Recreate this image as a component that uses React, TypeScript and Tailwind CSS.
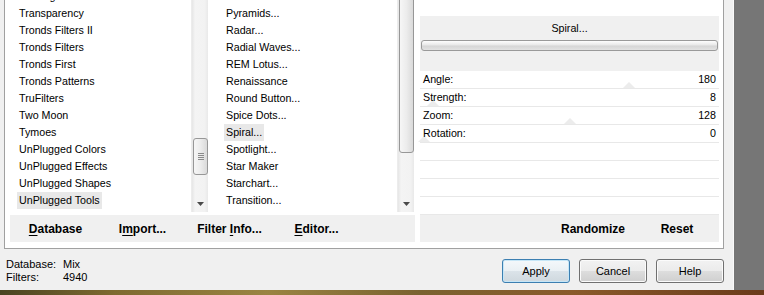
import React from "react";

const list1 = [
  "Tramages",
  "Transparency",
  "Tronds Filters II",
  "Tronds Filters",
  "Tronds First",
  "Tronds Patterns",
  "TruFilters",
  "Two Moon",
  "Tymoes",
  "UnPlugged Colors",
  "UnPlugged Effects",
  "UnPlugged Shapes",
  "UnPlugged Tools",
  "VanDerLee",
];

const list2 = [
  "",
  "Pyramids...",
  "Radar...",
  "Radial Waves...",
  "REM Lotus...",
  "Renaissance",
  "Round Button...",
  "Spice Dots...",
  "Spiral...",
  "Spotlight...",
  "Star Maker",
  "Starchart...",
  "Transition...",
  "Tri Blinds...",
];

const params = [
  { name: "Angle:", value: 180 },
  { name: "Strength:", value: 8 },
  { name: "Zoom:", value: 128 },
  { name: "Rotation:", value: 0 },
  null,
  null,
  null,
  null,
];

function DownArrow() {
  return (
    <svg width="7" height="4" viewBox="0 0 7 4" className="block">
      <path d="M0 0 H7 L3.5 4 Z" fill="#4a4a4a" />
    </svg>
  );
}

function Grip() {
  return (
    <div className="flex flex-col gap-[1px]">
      <div className="w-[6px] h-[1px] bg-[#8a8a8a]" />
      <div className="w-[6px] h-[1px] bg-[#8a8a8a]" />
      <div className="w-[6px] h-[1px] bg-[#8a8a8a]" />
      <div className="w-[6px] h-[1px] bg-[#8a8a8a]" />
    </div>
  );
}

function ListBox({
  items,
  selected,
  indent,
  variant,
}: {
  items: string[];
  selected: number;
  indent: string;
  variant: 1 | 2;
}) {
  return (
    <div className="flex h-[212px] overflow-hidden">
      <div className="flex-1 overflow-hidden">
        <div className="-mt-[12px] flex flex-col">
          {items.map((it, i) => (
            <div key={i} className={`h-[17px] leading-[17px] whitespace-nowrap ${indent}`}>
              <span className={`inline-block px-[2px] h-[17px] ${i === selected ? "bg-[#e8e8e8]" : ""}`}>{it}</span>
            </div>
          ))}
        </div>
      </div>
      <div className="relative w-[17px] h-full bg-[linear-gradient(90deg,#e6e6e6_0%,#f4f4f4_20%,#f2f2f2_80%,#e9e9e9_100%)] border-l border-[#ececec]">
        {variant === 1 ? (
          <div className="absolute left-[1px] top-[138px] w-[15px] h-[37px] rounded-[3px] border border-[#979797] bg-[linear-gradient(90deg,#f6f6f6_0%,#ececec_50%,#dadada_100%)] flex items-center justify-center">
            <Grip />
          </div>
        ) : (
          <div className="absolute left-[1px] -top-[4px] w-[15px] h-[157px] rounded-[3px] border border-[#979797] bg-[linear-gradient(90deg,#f6f6f6_0%,#ececec_50%,#dadada_100%)]" />
        )}
        <div className="absolute bottom-[6px] left-[5px]">
          <DownArrow />
        </div>
      </div>
    </div>
  );
}

function WinButton({ label, primary }: { label: string; primary?: boolean }) {
  return (
    <div
      className={`h-[24px] rounded-[3px] border flex items-center justify-center text-[11px] text-black ${
        primary
          ? "w-[68px] border-[#3c7fb1] shadow-[inset_0_0_0_1px_#c6e6f7] bg-[linear-gradient(#f4f8fb_0%,#eaf0f4_50%,#dbe3e9_51%,#cfd8de_100%)]"
          : "w-[68px] border-[#707070] shadow-[inset_0_0_0_1px_#fbfbfb] bg-[linear-gradient(#f2f2f2_0%,#ebebeb_50%,#dddddd_51%,#cfcfcf_100%)]"
      }`}
    >
      {label}
    </div>
  );
}

export default function App() {
  return (
    <div className="w-[764px] h-[295px] overflow-hidden flex flex-col [font-family:'Liberation_Sans',Arial,sans-serif] text-[10.7px] text-black">
      <div className="flex h-[290px]">
        <div className="w-[734px] h-full bg-[#f0f0f0] border-r border-[#fafafa] flex flex-col">
          <div className="ml-[4px] w-[720px] h-[249px] border-x border-b border-[#a0a0a0] bg-white flex flex-col">
            <div className="flex h-[215px] items-start">
              <div className="w-[203px]">
                <ListBox items={list1} selected={12} indent="pl-[12px]" variant={1} />
              </div>
              <div className="ml-[5px] w-[201px]">
                <ListBox items={list2} selected={8} indent="pl-[11px]" variant={2} />
              </div>
              <div className="ml-[6px] w-[299px] flex flex-col">
                <div className="h-[16px]" />
                <div className="h-[55px] bg-[#f0f0f0] flex flex-col">
                  <div className="pt-[5px] h-[19px] leading-[14px] text-center">Spiral...</div>
                  <div className="mt-[5px] mx-[1px] h-[11px] rounded-[3px] border border-[#9a9a9a] bg-[linear-gradient(#fdfdfd_0%,#e8e8e8_45%,#d6d6d6_55%,#e2e2e2_100%)]" />
                </div>
                {params.map((p, i) => (
                  <div key={i} className="relative h-[18px] border-b border-[#e8e8e8] flex items-center justify-between px-[3px] leading-[17px]">
                    {p && (
                      <>
                        <div
                          className="absolute bottom-0 w-0 h-0 border-x-[6px] border-x-transparent border-b-[6px] border-b-[#ececec]"
                          style={{ left: 4 + (p.value / 255) * 290 - 6 }}
                        />
                        <span className="relative">{p.name}</span>
                        <span className="relative">{p.value}</span>
                      </>
                    )}
                  </div>
                ))}
              </div>
            </div>
            <div className="flex h-[27px]">
              <div className="ml-[5px] w-[405px] h-full bg-[#f0f0f0] flex items-center pl-[2px] font-bold text-[12px]">
                <div className="w-[87px] text-center">
                  <span className="underline underline-offset-[2px]">D</span>atabase
                </div>
                <div className="w-[87px] text-center">
                  I<span className="underline underline-offset-[2px]">m</span>port...
                </div>
                <div className="w-[87px] text-center">
                  Filter <span className="underline underline-offset-[2px]">I</span>nfo...
                </div>
                <div className="w-[87px] text-center">
                  <span className="underline underline-offset-[2px]">E</span>ditor...
                </div>
              </div>
              <div className="ml-[5px] w-[299px] h-full bg-[#f0f0f0] flex items-center justify-end font-bold text-[12px]">
                <div className="w-[84px] text-center">Randomize</div>
                <div className="w-[84px] text-center">Reset</div>
              </div>
            </div>
          </div>
          <div className="flex flex-1">
            <div className="pl-[6px] pt-[9px] flex flex-col leading-[13px] text-[11px]">
              <div className="flex">
                <span className="w-[57px]">Database:</span>
                <span>Mix</span>
              </div>
              <div className="flex">
                <span className="w-[57px]">Filters:</span>
                <span>4940</span>
              </div>
            </div>
            <div className="ml-auto mr-[9px] pt-[10px] flex gap-[9px]">
              <WinButton label="Apply" primary />
              <WinButton label="Cancel" />
              <WinButton label="Help" />
            </div>
          </div>
        </div>
        <div className="flex-1 h-full bg-[#767676]" />
      </div>
      <div className="h-[5px] bg-[linear-gradient(90deg,#4a4422_0%,#7e6a30_15%,#9a8442_35%,#7a6230_55%,#8a5a2a_75%,#6a3a1a_100%)]" />
    </div>
  );
}
